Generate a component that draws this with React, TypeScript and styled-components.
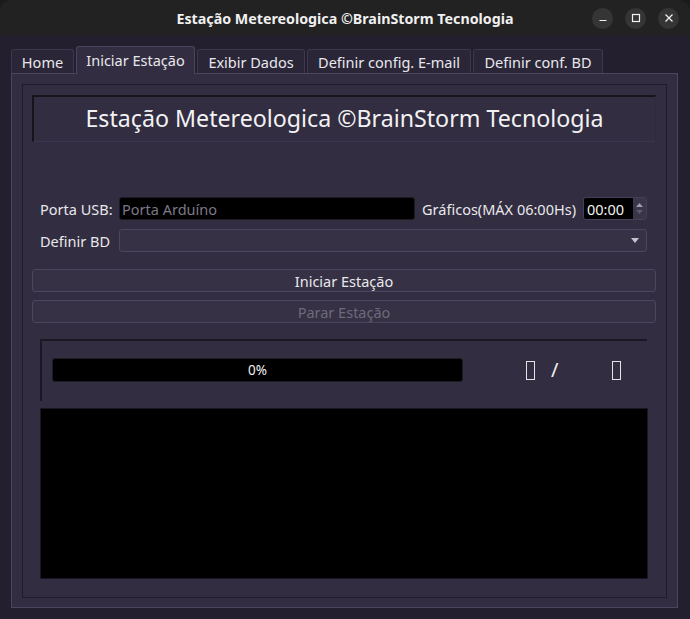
import React from "react";
import styled, { createGlobalStyle } from "styled-components";

const FONT = `"Noto Sans", "DejaVu Sans", sans-serif`;

const GlobalStyle = createGlobalStyle`
  html, body { margin: 0; padding: 0; background: #1b1b1b; }
  body { font-family: ${FONT}; }
  * { box-sizing: border-box; }
`;

const Window = styled.div`
  width: 690px;
  height: 619px;
  display: flex;
  flex-direction: column;
  background: #231f2e;
  border-radius: 12px 12px 0 0;
  overflow: hidden;
`;

const TitleBar = styled.header`
  height: 36px;
  flex: none;
  background: #222222;
  display: grid;
  grid-template-columns: 1fr auto 1fr;
  align-items: center;
`;

const Title = styled.h1`
  grid-column: 2;
  margin: 0;
  font: 700 14.25px ${FONT};
  color: #f0f0f0;
  white-space: nowrap;
`;

const Controls = styled.div`
  grid-column: 3;
  justify-self: end;
  display: flex;
  gap: 12px;
  padding-right: 11px;
`;

const CtrlButton = styled.div`
  width: 21px;
  height: 21px;
  border-radius: 50%;
  background: #353535;
  display: grid;
  place-items: center;
`;

const Body = styled.main`
  flex: 1;
  display: flex;
  flex-direction: column;
  padding: 10px 12px 11px 11px;
`;

const TabBar = styled.nav`
  display: flex;
  align-items: flex-end;
  gap: 2px;
  height: 27px;
  position: relative;
  z-index: 1;
`;

const Tab = styled.div<{ $active?: boolean; $w: number }>`
  width: ${(p) => p.$w}px;
  height: ${(p) => (p.$active ? 28 : 24)}px;
  margin-bottom: ${(p) => (p.$active ? -1 : 0)}px;
  background: ${(p) => (p.$active ? "#322d40" : "#2a2637")};
  border: 1px solid ${(p) => (p.$active ? "#4a4560" : "#3d384d")};
  border-bottom: none;
  border-radius: 3px 3px 0 0;
  color: #e8e8ec;
  font: 400 14.5px ${FONT};
  display: flex;
  justify-content: center;
  align-items: ${(p) => (p.$active ? "flex-start" : "center")};
  padding-top: ${(p) => (p.$active ? 3 : 0)}px;
  white-space: nowrap;
`;

const Pane = styled.section`
  flex: 1;
  display: flex;
  flex-direction: column;
  background: #322d40;
  border: 1px solid #4a4560;
  padding: 10px 10px 9px 10px;
`;

const Frame = styled.div`
  flex: 1;
  display: flex;
  flex-direction: column;
  border: 1px solid #1f1b29;
  padding: 10px 10px 18px 9px;
`;

const Banner = styled.div`
  height: 47px;
  flex: none;
  border-top: 2px solid #16131d;
  border-left: 2px solid #16131d;
  border-right: 1px solid #2e2a3c;
  border-bottom: 1px solid #3a3550;
  display: grid;
  place-items: center;
  color: #f2f2f4;
  font: 400 23.2px ${FONT};
  white-space: nowrap;
  padding-bottom: 2px;
`;

const Form = styled.div`
  margin: 55px 9px 0 8px;
  display: grid;
  grid-template-columns: 72px 1fr auto 64px;
  grid-auto-rows: 23px;
  column-gap: 7px;
  row-gap: 9px;
  align-items: center;
`;

const Label = styled.span`
  color: #e8e8ec;
  font: 400 14.5px ${FONT};
  white-space: nowrap;
`;

const TextInput = styled.div`
  height: 23px;
  background: #000;
  border: 1px solid #1c1a22;
  border-radius: 3px;
  color: #7d7888;
  font: 400 14.5px ${FONT};
  padding: 0 2px;
  display: flex;
  align-items: center;
`;

const Spin = styled.div`
  height: 23px;
  display: flex;
  border: 1px solid #45405a;
  border-radius: 3px;
  overflow: hidden;
`;

const SpinField = styled.div`
  flex: 1;
  background: #000;
  color: #f2f2f2;
  font: 400 14.5px ${FONT};
  display: flex;
  align-items: center;
  padding-left: 3px;
`;

const SpinArrows = styled.div`
  width: 13px;
  background: #3a3548;
  display: flex;
  flex-direction: column;
  justify-content: center;
  align-items: center;
  gap: 3px;
`;

const Combo = styled.div`
  grid-column: 2 / 5;
  height: 23px;
  background: #363144;
  border: 1px solid #4a4560;
  border-radius: 3px;
  display: flex;
  align-items: center;
  justify-content: flex-end;
  padding-right: 7px;
`;

const Buttons = styled.div`
  margin-top: 17px;
  display: flex;
  flex-direction: column;
  gap: 8px;
`;

const Button = styled.div<{ $disabled?: boolean }>`
  height: 23px;
  background: #363144;
  border: 1px solid #4a4560;
  border-radius: 3px;
  display: grid;
  place-items: center;
  color: ${(p) => (p.$disabled ? "#6e6a7a" : "#e8e8ec")};
  font: 400 14.5px ${FONT};
`;

const ProgressGroup = styled.div`
  margin: 16px 9px 0 8px;
  height: 62px;
  flex: none;
  border-top: 2px solid #1b1824;
  border-left: 2px solid #1b1824;
  padding: 17px 0 0 10px;
  display: flex;
  align-items: flex-start;
`;

const ProgressBar = styled.div`
  width: 411px;
  height: 24px;
  background: #000;
  border: 1px solid #1c1a22;
  border-radius: 3px;
  display: grid;
  place-items: center;
  color: #f2f2f2;
  font: 400 13.5px ${FONT};
`;

const Counter = styled.div`
  display: flex;
  align-items: center;
  height: 24px;
`;

const Tofu = styled.span<{ $ml: number }>`
  display: inline-block;
  width: 9px;
  height: 19px;
  margin-left: ${(p) => p.$ml}px;
  border: 1.5px solid #e4e4e4;
`;

const Slash = styled.span`
  margin-left: 16px;
  color: #f0f0f0;
  font: 400 20px ${FONT};
  line-height: 24px;
`;

const Output = styled.div`
  margin: 7px 8px 0 8px;
  flex: 1;
  background: #000;
  border: 1px solid #1a1625;
`;

const tabs = [
  { label: "Home", w: 63 },
  { label: "Iniciar Estação", w: 119, active: true },
  { label: "Exibir Dados", w: 108 },
  { label: "Definir config. E-mail", w: 164 },
  { label: "Definir conf. BD", w: 130 },
];

export default function App() {
  return (
    <>
      <GlobalStyle />
      <Window>
        <TitleBar>
          <Title>Estação Metereologica ©BrainStorm Tecnologia</Title>
          <Controls>
            <CtrlButton>
              <svg width="10" height="10" viewBox="0 0 10 10">
                <path d="M1.5 7.5h7" stroke="#f2f2f2" strokeWidth="1.2" />
              </svg>
            </CtrlButton>
            <CtrlButton>
              <svg width="10" height="10" viewBox="0 0 10 10">
                <rect x="1.5" y="1.5" width="7" height="7" fill="none" stroke="#f2f2f2" strokeWidth="1.2" />
              </svg>
            </CtrlButton>
            <CtrlButton>
              <svg width="10" height="10" viewBox="0 0 10 10">
                <path d="M1.5 1.5l7 7M8.5 1.5l-7 7" stroke="#f2f2f2" strokeWidth="1.2" />
              </svg>
            </CtrlButton>
          </Controls>
        </TitleBar>
        <Body>
          <TabBar>
            {tabs.map((t) => (
              <Tab key={t.label} $active={t.active} $w={t.w}>
                {t.label}
              </Tab>
            ))}
          </TabBar>
          <Pane>
            <Frame>
              <Banner>Estação Metereologica ©BrainStorm Tecnologia</Banner>
              <Form>
                <Label>Porta USB:</Label>
                <TextInput>Porta Arduíno</TextInput>
                <Label>Gráficos(MÁX 06:00Hs)</Label>
                <Spin>
                  <SpinField>00:00</SpinField>
                  <SpinArrows>
                    <svg width="7" height="4" viewBox="0 0 7 4">
                      <path d="M0 4L3.5 0L7 4z" fill="#a09daa" />
                    </svg>
                    <svg width="7" height="4" viewBox="0 0 7 4">
                      <path d="M0 0L3.5 4L7 0z" fill="#5e5a68" />
                    </svg>
                  </SpinArrows>
                </Spin>
                <Label>Definir BD</Label>
                <Combo>
                  <svg width="8" height="5" viewBox="0 0 8 5">
                    <path d="M0 0L4 5L8 0z" fill="#c4c1cc" />
                  </svg>
                </Combo>
              </Form>
              <Buttons>
                <Button>Iniciar Estação</Button>
                <Button $disabled>Parar Estação</Button>
              </Buttons>
              <ProgressGroup>
                <ProgressBar>0%</ProgressBar>
                <Counter>
                  <Tofu $ml={63} aria-label="?" />
                  <Slash>/</Slash>
                  <Tofu $ml={54} aria-label="?" />
                </Counter>
              </ProgressGroup>
              <Output />
            </Frame>
          </Pane>
        </Body>
      </Window>
    </>
  );
}
